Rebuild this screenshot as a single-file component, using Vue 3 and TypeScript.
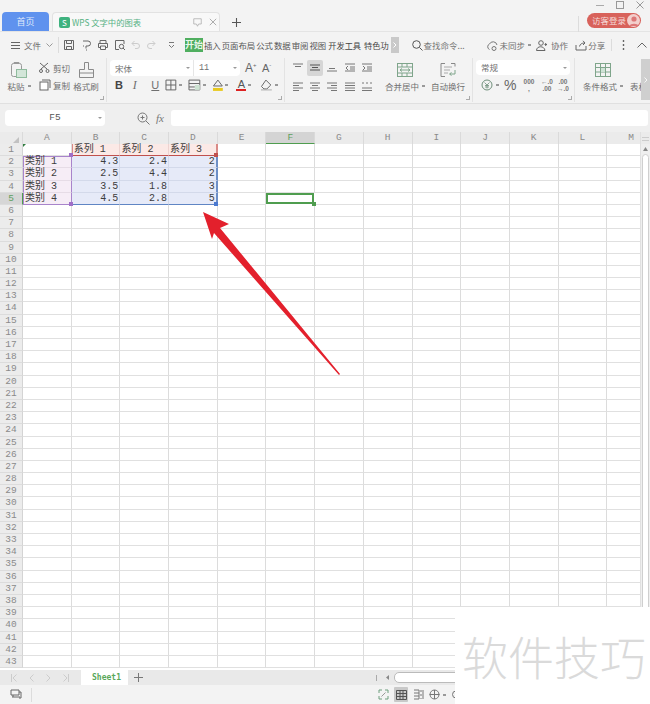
<script setup lang="ts">
const cols: string[] = ['A','B','C','D','E','F','G','H','I','J','K','L','M']
const rows: number[] = Array.from({ length: 43 }, (_, i) => i + 1)
const data: Record<string, string> = {
  B1: '系列 1', C1: '系列 2', D1: '系列 3',
  A2: '类别 1', B2: '4.3', C2: '2.4', D2: '2',
  A3: '类别 2', B3: '2.5', C3: '4.4', D3: '2',
  A4: '类别 3', B4: '3.5', C4: '1.8', D4: '3',
  A5: '类别 4', B5: '4.5', C5: '2.8', D5: '5'
}
function cellClass(c: string, r: number): string[] {
  const out: string[] = []
  const isData = 'BCD'.includes(c) && r >= 2 && r <= 5
  if (isData) { out.push('num', 'blue'); if (c === 'D') out.push('blue-r'); if (r === 5) out.push('blue-b') }
  if (c === 'A' && r >= 2 && r <= 5) { out.push('purple'); if (r === 2) out.push('purple-t'); if (r === 5) out.push('purple-b') }
  if ('BCD'.includes(c) && r === 1) { out.push('pink'); if (c === 'B') out.push('pink-l'); if (c === 'D') out.push('pink-r') }
  if (c === 'F' && r === 5) out.push('active')
  return out
}
const menus: string[] = ['插入', '页面布局', '公式', '数据', '审阅', '视图']
</script>

<template>
  <div class="app">
    <header class="titlebar">
      <div class="tab home">首页</div>
      <div class="tab doc">
        <span class="s-logo">S</span>
        <span class="doc-name">WPS 文字中的图表</span>
        <svg class="doc-pin" width="9" height="9" viewBox="0 0 12 12"><path d="M1 1h10v7H7.500L6 11 4.500 8H1z" fill="none" stroke="#aaa"/></svg>
        <svg width="8" height="8" viewBox="0 0 10 10"><path d="M1 1l8 8M9 1l-8 8" stroke="#999"/></svg>
      </div>
      <svg class="plus" width="9" height="9" viewBox="0 0 11 11"><path d="M5.500 0v11M0 5.500h11" stroke="#555" stroke-width="1.300"/></svg>
      <div class="win-area">
        <i class="vline win-v"></i>
        <div class="win-btns">
          <svg width="8" height="8" viewBox="0 0 8 8"><path d="M0 4.500h8" stroke="#aaa"/></svg>
          <svg width="8" height="8" viewBox="0 0 8 8"><rect x=".5" y=".5" width="7" height="7" fill="none" stroke="#999"/></svg>
          <svg width="8" height="8" viewBox="0 0 8 8"><path d="M.5.500l7 7M7.500.5l-7 7" stroke="#999"/></svg>
        </div>
        <div class="login">访客登录<span class="avatar"><svg width="12" height="12" viewBox="0 0 12 12"><circle cx="6" cy="4" r="2.600" fill="#d77"/><path d="M1.500 11c.5-3 8.500-3 9 0z" fill="#d77"/></svg></span></div>
      </div>
    </header>

    <nav class="menubar">
      <svg class="m-ham" width="9" height="7" viewBox="0 0 9 7"><path d="M0 .5h9M0 3.500h9M0 6.500h9" stroke="#666"/></svg>
      <span class="m-file">文件</span>
      <svg class="m-chev" width="7" height="4" viewBox="0 0 7 4"><path d="M.5.500l3 3 3-3" fill="none" stroke="#999"/></svg>
      <i class="vline m-v1"></i>
      <div class="quick">
        <svg width="12" height="12" viewBox="0 0 12 12"><path d="M1.500 1.500h9v9h-9zM3.500 1.500v3h5v-3M3.500 10.500v-3h5v3" fill="none" stroke="#666"/></svg>
        <svg width="12" height="12" viewBox="0 0 12 12"><path d="M3 2h5a2.500 2.500 0 0 1 0 5H6v2.500M4 7H3M6 11h1" fill="none" stroke="#666"/></svg>
        <svg width="12" height="12" viewBox="0 0 12 12"><path d="M3 4V1.500h6V4M1.500 4.500h9v4h-2M3.500 8.500h-2v-4M3.500 7h5v3.500h-5z" fill="none" stroke="#666"/></svg>
        <svg width="12" height="12" viewBox="0 0 12 12"><path d="M10 5V1.500H1.500v9H5" fill="none" stroke="#666"/><circle cx="7.500" cy="7.500" r="2.200" fill="none" stroke="#666"/><path d="M9 9l2 2" stroke="#666"/></svg>
        <svg width="10" height="10" viewBox="0 0 10 10"><path d="M3.500 1L1 3.500 3.500 6M1 3.500h5a2.500 2.500 0 0 1 0 5H4" fill="none" stroke="#ccc"/></svg>
        <svg width="10" height="10" viewBox="0 0 10 10"><path d="M6.500 1L9 3.500 6.500 6M9 3.500H4a2.500 2.500 0 0 0 0 5h2" fill="none" stroke="#ccc"/></svg>
        <svg class="q-drop" width="7" height="6" viewBox="0 0 7 6"><path d="M1 .5h5M1 3l2.500 2.500L6 3" fill="none" stroke="#777"/></svg>
      </div>
      <span class="start">开始</span>
      <div class="menus"><span v-for="m in menus" :key="m">{{ m }}</span></div>
      <span class="m-dark m-dev">开发工具</span>
      <span class="m-dark m-sp">特色功</span>
      <span class="more"><svg width="4" height="6" viewBox="0 0 4 6"><path d="M.5.500L3 3 .5 5.500" fill="none" stroke="#fff"/></svg></span>
      <svg class="m-search" width="11" height="11" viewBox="0 0 11 11"><circle cx="4.500" cy="4.500" r="3.800" fill="none" stroke="#555"/><path d="M7.500 7.500l3 3" stroke="#555"/></svg>
      <span class="m-find">查找命令...</span>
      <svg class="m-cloud" width="13" height="11" viewBox="0 0 13 11"><path d="M3.500 9.500a3 3 0 0 1 0-5.500 4 4 0 0 1 7.500 1M8 10.500a2 2 0 1 0 0-4 2 2 0 0 0 0 4z" fill="none" stroke="#777"/></svg>
      <span class="m-act">未同步</span><i class="dash m-dot"></i>
      <svg class="m-user" width="11" height="11" viewBox="0 0 11 11"><circle cx="5" cy="3" r="2.300" fill="none" stroke="#666"/><path d="M.5 10.500c0-5 8-5 8.500 0zM8.500 4.500h2.500M9.700 3v3" fill="none" stroke="#666"/></svg>
      <span class="m-act m-co">协作</span>
      <svg class="m-share" width="12" height="11" viewBox="0 0 12 11"><path d="M1 5v5h10V6M4.500 6.500C5 4 7 3 9.500 3M8 .8L10 3 8 5" fill="none" stroke="#666"/></svg>
      <span class="m-act m-co2">分享</span>
      <i class="vline m-v2"></i>
      <svg class="m-kebab" width="3" height="10" viewBox="0 0 3 10"><path d="M1.500 0v2M1.500 4v2M1.500 8v2" stroke="#666" stroke-width="1.400"/></svg>
      <svg class="m-up" width="10" height="6" viewBox="0 0 10 6"><path d="M.5 5.500L5 1l4.500 4.500" fill="none" stroke="#666"/></svg>
    </nav>

    <section class="ribbon">
      <div class="grp g-clip">
        <div class="big paste">
          <svg width="16" height="16" viewBox="0 0 16 16"><rect x=".5" y="1.500" width="10" height="13" rx="2" fill="none" stroke="#999"/><path d="M3 1.500V.5h5v1" fill="none" stroke="#999"/><rect x="5.500" y="7.500" width="10" height="8" fill="#d3e6d9" stroke="#8fbb9d"/></svg>
          <span>粘贴<i class="dash lab"></i></span>
        </div>
        <div class="clip-col">
          <span class="mini"><svg width="12" height="11" viewBox="0 0 12 11"><path d="M1 1l7 6M9 1L2 7" stroke="#666"/><circle cx="2" cy="9" r="1.500" fill="none" stroke="#666"/><circle cx="8.500" cy="9" r="1.500" fill="none" stroke="#666"/></svg>剪切</span>
          <span class="mini"><svg width="12" height="12" viewBox="0 0 12 12"><rect x="1" y="3" width="8" height="8" fill="#fff" stroke="#666"/><path d="M3 1h8v8" fill="none" stroke="#666"/></svg>复制</span>
        </div>
        <div class="big brush">
          <svg width="15" height="16" viewBox="0 0 15 16"><path d="M5.500.5h4v7h5v8H.5v-8h5z" fill="none" stroke="#8a8a8a"/><path d="M.5 11h14" stroke="#8a8a8a"/></svg>
          <span>格式刷</span>
        </div>
        <i class="corner"></i>
      </div>
      <div class="grp g-font">
        <div class="font-row">
          <div class="combo fontname">宋体<i class="caret"></i></div>
          <div class="combo fontsize">11<i class="caret"></i></div>
          <span class="grow">A<sup>+</sup></span>
          <span class="grow small">A<sup>-</sup></span>
        </div>
        <div class="fmt-row">
          <span class="f-b">B</span>
          <span class="f-i">I</span>
          <span class="f-u">U</span>
          <svg width="12" height="12" viewBox="0 0 12 12"><path d="M1 1h10v10H1zM6 1v10M1 6h10" fill="none" stroke="#666"/></svg><i class="dash tri"></i>
          <svg width="13" height="12" viewBox="0 0 13 12"><path d="M1 1h11v10H1zM1 4.500h11M1 8h6" fill="none" stroke="#666"/><path d="M7 6h5v5H7z" fill="#cde3d2"/></svg><i class="dash tri"></i>
          <svg width="12" height="13" viewBox="0 0 12 13"><path d="M6 1L1.500 7h9z" fill="none" stroke="#666"/><rect x="1" y="9" width="10" height="3" fill="#e8c91d"/></svg><i class="dash tri"></i>
          <span class="f-a">A</span><i class="dash tri"></i>
          <svg class="f-er" width="13" height="12" viewBox="0 0 13 12"><path d="M6 1l5 5-4 4H4L1.500 7.500z" fill="none" stroke="#666"/><path d="M1 11h11" stroke="#aaa"/></svg><i class="dash tri"></i>
        </div>
        <i class="corner"></i>
      </div>
      <div class="grp g-align">
        <div class="al-grid">
          <svg width="10" height="9" viewBox="0 0 10 9"><path d="M0 1h10M2 3.500h6" stroke="#777"/></svg>
          <span class="al-on"><svg width="10" height="9" viewBox="0 0 10 9"><path d="M0 2h10M2 4.500h6M0 7h10" stroke="#555"/></svg></span>
          <svg width="10" height="9" viewBox="0 0 10 9"><path d="M2 5.500h6M0 8h10" stroke="#777"/></svg>
          <svg width="10" height="9" viewBox="0 0 10 9"><path d="M0 1h10M5 4h5M5 6h5M0 8h10M3 3L1 5l2 2" fill="none" stroke="#777"/></svg>
          <svg width="10" height="9" viewBox="0 0 10 9"><path d="M0 1h10M5 4h5M5 6h5M0 8h10M1 3l2 2-2 2" fill="none" stroke="#777"/></svg>
          <svg width="10" height="9" viewBox="0 0 10 9"><path d="M0 1h10M0 3.500h6M0 6h10M0 8.500h6" stroke="#777"/></svg>
          <svg width="10" height="9" viewBox="0 0 10 9"><path d="M0 1h10M2 3.500h6M0 6h10M2 8.500h6" stroke="#777"/></svg>
          <svg width="10" height="9" viewBox="0 0 10 9"><path d="M0 1h10M4 3.500h6M0 6h10M4 8.500h6" stroke="#777"/></svg>
          <svg width="10" height="9" viewBox="0 0 10 9"><path d="M0 1h10M0 3.500h10M0 6h10M0 8.500h10" stroke="#777"/></svg>
          <svg width="10" height="9" viewBox="0 0 10 9"><path d="M0 1h2M4 1h2M8 1h2M0 6h10M0 8.500h10" stroke="#777"/></svg>
        </div>
        <div class="big merge">
          <svg width="16" height="15" viewBox="0 0 16 14"><rect x=".5" y=".5" width="15" height="13" fill="none" stroke="#7fa58b"/><path d="M.5 4h15M.5 10h15M5 .5V4M10 .5V4M5 10v3.500M10 10v3.500" stroke="#7fa58b"/><path d="M3 7h10M5 5.500L3 7l2 1.500M11 5.500L13 7l-2 1.500" fill="none" stroke="#7fa58b"/></svg>
          <span>合并居中<i class="dash lab"></i></span>
        </div>
        <div class="big wrap">
          <svg width="16" height="15" viewBox="0 0 16 14"><path d="M5 .5H1v13h4M11 .5h4v3" fill="none" stroke="#888"/><path d="M4 4h8M4 7h6M4 10h4" stroke="#aaa"/><path d="M15 7v4H10M11.500 9.500L9.500 11l2 1.500" fill="none" stroke="#7fa58b"/></svg>
          <span>自动换行</span>
        </div>
        <i class="corner"></i>
      </div>
      <div class="grp g-num">
        <div class="combo numfmt">常规<i class="caret"></i></div>
        <div class="num-row">
          <svg width="12" height="12" viewBox="0 0 12 12"><circle cx="6" cy="6" r="5" fill="none" stroke="#6f8f7b"/><path d="M3.500 3.500L6 6l2.500-2.500M6 6v3.500M4 6.500h4M4 8h4" fill="none" stroke="#6f8f7b" stroke-width=".8"/></svg><i class="dash tri"></i>
          <span class="pct">%</span>
          <span class="thou">000<br>,</span>
          <span class="dec">←.0<br>.00</span>
          <span class="dec">.00<br>→.0</span>
        </div>
        <i class="corner"></i>
      </div>
      <div class="big cond">
        <svg width="16" height="15" viewBox="0 0 16 14"><rect x=".5" y=".5" width="15" height="13" fill="none" stroke="#7fa58b"/><path d="M.5 4.500h15M.5 9h15M5.500.5v13M10.500.5v13" stroke="#7fa58b"/><rect x="6" y="5" width="4" height="4" fill="#cfe3d6"/></svg>
        <span>条件格式<i class="dash lab"></i></span>
      </div>
      <div class="big tblstyle">
        <svg class="tb-ic" width="16" height="15" viewBox="0 0 16 14"><path d="M.5 1v12" stroke="#7fa58b"/></svg>
        <span>表格</span>
      </div>
      <div class="rb-scroll"><svg width="4" height="6" viewBox="0 0 4 6"><path d="M.5.500L3 3 .5 5.500" fill="none" stroke="#f7f7f7"/></svg></div>
    </section>

    <div class="formula">
      <div class="namebox"><span>F5</span><i class="caret"></i></div>
      <svg class="zoomfx" width="13" height="13" viewBox="0 0 13 13"><circle cx="5.500" cy="5.500" r="4.500" fill="none" stroke="#777"/><path d="M3.500 5.500h4M5.500 3.500v4M9 9l3.500 3.500" stroke="#777"/></svg>
      <span class="fx">fx</span>
      <div class="input"></div>
    </div>

    <main class="sheet">
      <div class="grid">
        <div class="hd corner-hd"><i></i></div>
        <div v-for="c in cols" :key="c" class="hd" :class="{ 'hd-on': c === 'F' }">{{ c }}</div>
        <template v-for="r in rows" :key="r">
          <div class="hd rh" :class="{ 'rh-on': r === 5 }">{{ r }}</div>
          <div v-for="c in cols" :key="c + r" class="cell" :class="cellClass(c, r)"><span>{{ data[c + r] }}</span><i v-if="c === 'F' && r === 5" class="h h-green"></i><i v-if="c === 'D' && r === 5" class="h h-blue"></i><i v-if="c === 'A' && r === 5" class="h h-purple"></i><i v-if="c === 'A' && r === 1" class="h h-purple"></i><i v-if="c === 'D' && r === 1" class="h h-red"></i><i v-if="c === 'A' && r === 1" class="h-tri"></i></div>
        </template>
      </div>
      <div class="vscroll">
        <div class="vs-top"><i></i></div>
        <svg class="vs-arrow" width="5" height="4" viewBox="0 0 5 4"><path d="M2.500 0L5 4H0z" fill="#888"/></svg>
        <div class="vs-thumb"></div>
      </div>
      <svg class="arrow" width="140" height="165" viewBox="0 0 140 165">
        <path d="M2 1L28 13 19 17 139 163 138 164 13 22 11 28z" fill="#e3202c"/>
      </svg>
    </main>

    <div class="tabsbar">
      <div class="navs">
        <svg width="6" height="8" viewBox="0 0 6 8"><path d="M.5 0v8M5.500.5L2 4l3.500 3.500" fill="none" stroke="#ccc"/></svg>
        <svg width="5" height="8" viewBox="0 0 5 8"><path d="M4.500.5L1 4l3.500 3.500" fill="none" stroke="#ccc"/></svg>
        <svg width="5" height="8" viewBox="0 0 5 8"><path d="M.5.500L4 4 .5 7.500" fill="none" stroke="#ccc"/></svg>
        <svg width="6" height="8" viewBox="0 0 6 8"><path d="M5.500 0v8M.5.500L4 4 .5 7.500" fill="none" stroke="#ccc"/></svg>
      </div>
      <div class="sheet-tab">Sheet1</div>
      <svg class="addsheet" width="9" height="9" viewBox="0 0 9 9"><path d="M4.500 0v9M0 4.500h9" stroke="#777"/></svg>
      <div class="hs">
        <i class="hs-sep"></i>
        <svg class="hs-arr" width="3" height="5" viewBox="0 0 3 5"><path d="M3 0L0 2.500 3 5z" fill="#888"/></svg>
        <div class="hs-thumb"></div>
      </div>
    </div>

    <footer class="status">
      <svg class="st-l" width="12" height="12" viewBox="0 0 12 12"><path d="M1 1h8v5H1zM2 8h8M3 6v2M9 3h2v6H9" fill="none" stroke="#666"/></svg>
      <i class="vline st-v"></i>
      <div class="st-r">
        <svg width="11" height="11" viewBox="0 0 11 11"><path d="M1 4V1h3M7 1h3v3M10 7v3H7M4 10H1V7" fill="none" stroke="#6f9f7f"/><path d="M3.500 7.500l4-4" stroke="#999"/></svg>
        <span class="st-on"><svg width="11" height="10" viewBox="0 0 11 10"><path d="M.5.500h10v9H.5zM.5 3.500h10M.5 6.500h10M4 .5v9M7 .5v9" fill="none" stroke="#555"/></svg></span>
        <svg width="11" height="11" viewBox="0 0 11 11"><path d="M1 1h5v9H1M1 4h5M1 7h5M8 1v2M8 5v2M8 9v1M10 1v9" fill="none" stroke="#777"/></svg>
        <svg width="11" height="11" viewBox="0 0 11 11"><circle cx="5.500" cy="5.500" r="4.500" fill="none" stroke="#777"/><path d="M5.500 1v9M.5 5.500h10" stroke="#777"/></svg><i class="dash st-tri"></i>
        <svg class="st-cut" width="10" height="11" viewBox="0 0 10 11"><circle cx="5" cy="5.500" r="3.500" fill="none" stroke="#777"/></svg>
      </div>
    </footer>

    <aside class="wm">软件技巧</aside>
  </div>
</template>

<style>
html, body { margin: 0; background: #f3f3f3; }
</style>

<style scoped>
.app {
  width: 650px; height: 704px; position: relative; overflow: hidden;
  display: flex; flex-direction: column; background: #f3f3f3;
  font-family: "Noto Sans CJK SC", "Noto Sans", sans-serif; color: #707070;
}
.dash { display: inline-block; width: 3px; height: 2px; background: #999; flex: none; }
.caret { position: absolute; right: 3px; top: 7px; width: 0; height: 0; border-left: 2px solid transparent; border-right: 2px solid transparent; border-top: 2px solid #999; }
.titlebar { height: 32px; flex: none; display: flex; align-items: flex-end; padding-left: 2px; box-sizing: border-box; border-bottom: 1px solid #e4e4e4; }
.tab { height: 19px; box-sizing: border-box; display: flex; align-items: center; border-radius: 4px 4px 0 0; font-size: 9px; }
.home { width: 47px; background: #5f92ee; color: #dfe9fb; justify-content: center; }
.doc { width: 168px; margin-left: 3px; background: #f8f8f8; border: 1px solid #e2e2e2; border-bottom: 0; padding-left: 6px; }
.s-logo { width: 11px; height: 11px; background: #3fb27f; color: #fff; font-size: 8px; line-height: 11px; text-align: center; border-radius: 2px; flex: none; }
.doc-name { margin-left: 2px; color: #55b183; width: 121px; font-size: 8.300px; white-space: nowrap; flex: none; }
.doc-pin { margin-right: 7px; }
.plus { margin: 0 0 4px 12px; }
.win-area { margin-left: auto; width: 73px; height: 32px; position: relative; }
.win-v { position: absolute; left: 1px; top: 17px; height: 10px; }
.win-btns { display: flex; gap: 12px; justify-content: flex-end; padding: 2px 6px 0 0; height: 8px; }
.login { position: absolute; right: 9px; top: 14px; width: 54px; height: 15px; box-sizing: border-box; background: #d8625b; color: #f6dcda; border-radius: 8px; font-size: 8.500px; line-height: 15px; padding-left: 5px; }
.avatar { position: absolute; right: 1px; top: 1px; width: 13px; height: 13px; border-radius: 50%; background: #f3cfcc; display: flex; align-items: center; justify-content: center; }

.menubar { height: 26px; flex: none; display: flex; align-items: center; font-size: 8.500px; padding-left: 11px; box-sizing: border-box; white-space: nowrap; line-height: 14px; }
.vline { display: block; width: 1px; height: 16px; background: #dcdcdc; flex: none; }
.m-file { margin-left: 4px; width: 18px; font-size: 8.500px; }
.m-chev { margin-left: 4px; }
.m-v1 { margin-left: 5px; }
.quick { display: flex; align-items: center; gap: 5px; margin-left: 4px; }
.q-drop { margin-left: 7px; }
.start { margin-left: 10px; width: 18px; height: 14px; background: #4fae5f; color: #e9f6ea; font-size: 9px; line-height: 14px; text-align: center; font-weight: 700; flex: none; }
.menus { display: flex; color: #555; font-size: 8.400px; margin-left: 1px; gap: 1px; }
.m-dark { color: #444; font-size: 8.200px; }
.m-dev { margin-left: 2px; }
.m-sp { margin-left: 3px; }
.more { width: 8px; height: 16px; background: #c9c9c9; margin-left: 2px; display: flex; align-items: center; justify-content: center; flex: none; }
.m-search { margin-left: 13px; }
.m-find { margin-left: 1px; width: 42px; font-size: 8.500px; color: #777; }
.m-cloud { margin-left: 20px; }
.m-act { font-size: 8.500px; margin-left: 1px; color: #707070; }
.m-dot { margin-left: 3px; }
.m-user { margin-left: 5px; }
.m-co { margin-left: 4px; }
.m-share { margin-left: 7px; }
.m-co2 { margin-left: 1px; }
.m-v2 { margin-left: 6px; height: 12px; }
.m-kebab { margin-left: 10px; }
.m-up { margin-left: 12px; }

.ribbon { height: 46px; flex: none; display: flex; background: #f3f3f3; border-bottom: 1px solid #e0e0e0; box-sizing: border-box; position: relative; font-size: 8.500px; white-space: nowrap; line-height: 12px; }
.grp { position: relative; height: 44px; box-sizing: border-box; flex: none; border-right: 1px solid #e3e3e3; display: flex; }
.corner { position: absolute; right: 2px; bottom: 2px; width: 3px; height: 3px; border-right: 1px solid #aaa; border-bottom: 1px solid #aaa; }
.big { display: flex; flex-direction: column; align-items: center; gap: 2px; padding-top: 4px; box-sizing: border-box; flex: none; }
.big svg { height: 16px; flex: none; }
.lab { margin-left: 3px; vertical-align: 3px; }
.g-clip { width: 107px; padding-left: 9px; }
.paste { width: 20px; }
.clip-col { margin-left: 10px; display: flex; flex-direction: column; gap: 4px; padding-top: 3px; width: 34px; }
.mini { display: flex; align-items: center; gap: 2px; height: 13px; }
.brush { width: 26px; margin-left: 0; }
.g-font { width: 178px; flex-direction: column; padding-left: 3px; }
.font-row { display: flex; align-items: center; margin-top: 1px; height: 18px; }
.combo { background: #fff; height: 16px; border-radius: 4px; box-sizing: border-box; position: relative; padding-left: 5px; line-height: 16px; font-size: 8.500px; }
.fontname { width: 83px; border-radius: 4px 0 0 4px; }
.fontsize { width: 47px; border-radius: 0 4px 4px 0; border-left: 1px solid #e6e6e6; font-family: "Liberation Mono", monospace; }
.grow { font-size: 12px; margin-left: 5px; font-family: "Liberation Sans", sans-serif; width: 15px; color: #666; }
.grow.small { font-size: 11px; margin-left: 2px; }
.grow sup { font-size: 6px; vertical-align: 5px; line-height: 0; }
.fmt-row { display: flex; align-items: center; margin-top: 0; height: 16px; font-family: "Liberation Sans", sans-serif; font-size: 12px; padding-left: 5px; }
.f-b { font-weight: 700; color: #444; width: 18px; font-size: 11px; }
.f-i { font-style: italic; width: 19px; font-family: "Liberation Serif", serif; }
.f-u { text-decoration: underline; width: 14px; font-size: 11px; }
.tri { margin: 0 6px 0 2px; }
.f-a { border-bottom: 2.500px solid #d22; line-height: 10px; font-size: 11px; color: #555; width: 10px; text-align: center; margin-left: 2px; }
.f-er { margin-left: 3px; }
.g-align { width: 188px; padding-left: 4px; }
.al-grid { display: grid; grid-template-columns: repeat(5, 17.400px); grid-auto-rows: 19px; align-items: center; justify-items: center; width: 88px; flex: none; }
.al-on { background: #d6d6d6; width: 16px; height: 16px; border-radius: 2px; display: flex; align-items: center; justify-content: center; }
.merge { width: 44px; margin-left: 6px; }
.wrap { width: 40px; margin-left: 1px; }
.g-num { width: 102px; flex-direction: column; padding-left: 3px; }
.numfmt { width: 94px; margin-top: 2px; height: 15px; line-height: 15px; }
.num-row { display: flex; align-items: center; padding-left: 5px; margin-top: 3px; }
.num-row .tri { margin: 0 5px 0 3px; }
.pct { font-size: 14px; font-family: "Liberation Sans", sans-serif; margin-right: 5px; line-height: 14px; color: #666; }
.thou, .dec { font-size: 6.500px; line-height: 7px; font-family: "Liberation Sans", sans-serif; font-weight: 700; color: #777; text-align: center; width: 15px; }
.thou { margin-right: 3px; }
.dec { margin-right: 1px; }
.cond { width: 50px; margin-left: 3px; }
.tblstyle { width: 16px; margin-left: 2px; align-items: flex-start; overflow: hidden; }
.tb-ic { margin-left: 11px; }
.rb-scroll { position: absolute; right: 0; top: 1px; width: 9px; height: 41px; background: #cfcfcf; display: flex; align-items: center; justify-content: center; }

.formula { height: 28px; flex: none; display: flex; align-items: center; padding-left: 5px; box-sizing: border-box; background: #efefef; }
.namebox { width: 100px; height: 16px; background: #fff; border-radius: 4px; position: relative; text-align: center; font-family: "Liberation Mono", monospace; font-size: 9.500px; line-height: 16px; color: #555; }
.zoomfx { margin-left: 32px; }
.fx { font-family: "Liberation Serif", serif; font-style: italic; font-size: 11px; margin-left: 6px; width: 15px; color: #777; }
.input { flex: 1; height: 16px; background: #fff; border-radius: 3px; margin-right: 2px; }

.sheet { flex: 1; min-height: 0; position: relative; display: flex; background: #fff; overflow: hidden; }
.grid { display: grid; grid-template-columns: 23px repeat(13, 48.700px); grid-template-rows: 12px repeat(43, 12.200px); align-content: start; flex: none; width: 640px; overflow: hidden; font-family: "Liberation Mono", "Noto Sans CJK SC", monospace; font-size: 10px; line-height: 12px; background: #fff; }
.hd { background: #ebebeb; color: #8a8a8a; text-align: center; font-size: 9.500px; line-height: 12px; border-right: 1px solid #dadada; box-sizing: border-box; }
.corner-hd { position: relative; }
.corner-hd i { position: absolute; right: 3px; bottom: 1px; border-left: 6px solid transparent; border-bottom: 6px solid #c2c2c2; }
.hd-on { background: #d4d4d4; border-bottom: 1px solid #4f9d4f; color: #5f9f5f; }
.rh { border-bottom: 1px solid #dcdcdc; border-right: 1px solid #d4d4d4; background: #ececec; }
.rh-on { background: #d6d6d6; color: #5f9f5f; border-right: 1px solid #4f9d4f; }
.cell { border-right: 1px solid #dcdcdc; border-bottom: 1px solid #e0e0e0; box-sizing: border-box; color: #3d3d3d; padding-left: 1px; white-space: nowrap; position: relative; overflow: visible; min-width: 0; }
.num { text-align: right; padding: 0 1px 0 0; }
.blue { background: #e6eaf8; border-right-color: #d3d9ea; border-bottom-color: #d3d9ea; }
.blue-r { border-right: 2px solid #6d8fc7; }
.blue-b { border-bottom: 1px solid #5f85c4; }
.purple { background: #f6edf6; border-right: 1px solid #a884cb; border-left: 1px solid #a884cb; border-bottom-color: #e6dce6; }
.purple-t { box-shadow: inset 0 1px 0 #a884cb; }
.purple-b { border-bottom: 1px solid #a884cb; }
.pink { background: #fbe9e6; border-bottom: 1px solid #c0504d; border-right-color: #edd3d0; }
.pink-l { border-left: 1px solid #d98a86; }
.pink-r { border-right: 2px solid #d98a86; }
.active { box-shadow: inset 0 0 0 2px #4f9d4f; border-color: transparent; }
.h { position: absolute; right: -2px; bottom: -2px; width: 4px; height: 4px; z-index: 2; }
.h-green { background: #4f9d4f; }
.h-blue { background: #4a79d0; }
.h-purple { background: #a06fc8; }
.h-red { background: #c0504d; }
.h-tri { position: absolute; left: 0; top: 0; border-right: 3px solid transparent; border-top: 3px solid #2f7d3f; }
.vscroll { flex: 1; background: #efefef; position: relative; border-left: 1px solid #e0e0e0; box-sizing: border-box; }
.vs-top { height: 12px; background: #ebebeb; position: relative; }
.vs-top i { position: absolute; left: 1px; right: 1px; top: 5px; height: 2px; border-top: 1px solid #ccc; border-bottom: 1px solid #ccc; }
.vs-arrow { display: block; margin: 3px auto; }
.vs-thumb { margin: 0 1px; height: 480px; background: #fff; border: 1px solid #cfcfcf; border-radius: 5px; }
.arrow { position: absolute; left: 201px; top: 79px; }

.tabsbar { height: 15px; flex: none; background: #e9e9e9; display: flex; align-items: center; position: relative; }
.navs { display: flex; gap: 12px; padding-left: 11px; width: 81px; box-sizing: border-box; flex: none; }
.sheet-tab { width: 47px; height: 15px; box-sizing: border-box; padding-left: 4px; background: #fff; color: #5aa85a; font: 700 8px/15px "DejaVu Sans Mono", "Liberation Mono", monospace; text-align: center; }
.addsheet { margin-left: 6px; }
.hs { margin-left: auto; width: 274px; display: flex; align-items: center; }
.hs-sep { width: 1px; height: 6px; background: #aaa; }
.hs-arr { margin-left: 9px; flex: none; }
.hs-thumb { margin-left: 5px; flex: 1; height: 9px; background: #fff; border: 1px solid #bbb; border-radius: 5px; }

.status { height: 19px; flex: none; background: #f3f3f3; display: flex; align-items: center; position: relative; }
.st-l { margin-left: 10px; }
.st-v { margin-left: 9px; height: 14px; }
.st-r { display: flex; align-items: center; margin-left: 346px; gap: 5px; }
.st-on { width: 14px; height: 15px; background: #c9c9c9; display: flex; align-items: center; justify-content: center; border-radius: 1px; }
.st-tri { margin-left: -2px; }
.st-cut { flex: none; }

.wm { position: absolute; left: 455px; top: 607px; width: 195px; height: 97px; background: #fff; color: #dadada; font-size: 46px; line-height: 97px; padding-left: 7px; box-sizing: border-box; white-space: nowrap; font-weight: 300; }
</style>
